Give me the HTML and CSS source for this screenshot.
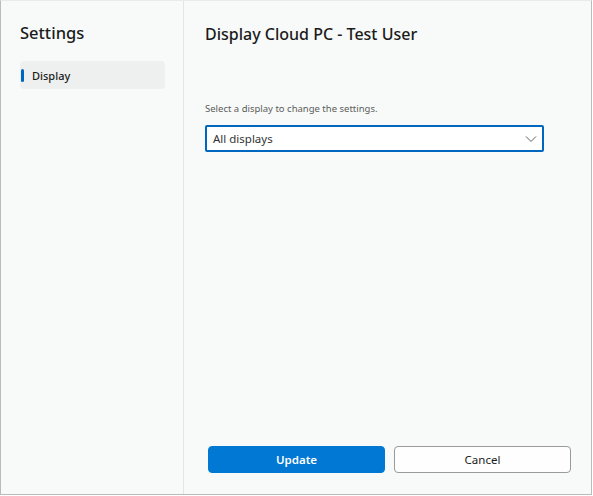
FILE: index.html
```html
<!DOCTYPE html>
<html>
<head>
<meta charset="utf-8">
<link rel="stylesheet" href="styles.css">
</head>
<body>
<div class="window">
  <aside class="sidebar">
    <h1 class="side-title">Settings</h1>
    <div class="nav-item active"><span class="bar"></span><span>Display</span></div>
  </aside>
  <main class="main">
    <h2 class="title">Display Cloud PC - Test User</h2>
    <div class="field">
      <label class="label">Select a display to change the settings.</label>
      <div class="select">
        <span>All displays</span>
        <svg class="chev" width="12" height="8" viewBox="0 0 12 8"><path d="M1 1.5 L6 6.5 L11 1.5" fill="none" stroke="#5f5f5f" stroke-width="1"/></svg>
      </div>
    </div>
    <div class="actions">
      <button class="btn primary">Update</button>
      <button class="btn secondary">Cancel</button>
    </div>
  </main>
</div>
</body>
</html>
```
FILE: styles.css
```css
html, body {
  margin: 0;
  padding: 0;
  background: #ffffff;
}
body {
  font-family: "Noto Sans", "Open Sans", sans-serif;
  color: #1b1b1b;
}
.window {
  width: 590px;
  height: 493px;
  border: 1px solid #b9bcbb;
  border-top-color: #e8ebea;
  display: flex;
  background: #f7faf8;
}
.sidebar {
  width: 183px;
  flex: none;
  border-right: 1px solid #e3e6e4;
  padding: 20px 18px 0 19px;
  box-sizing: border-box;
}
.side-title {
  margin: 0;
  font-size: 16.5px;
  font-weight: 500;
  line-height: 24px;
}
.nav-item {
  margin-top: 16px;
  height: 28px;
  width: 145px;
  background: #edf0ee;
  border-radius: 4px;
  display: flex;
  align-items: center;
  font-size: 11px;
  font-weight: 500;
  gap: 8px;
}
.bar {
  width: 3px;
  height: 13px;
  background: #0067c0;
  border-radius: 2px;
  margin-left: 1px;
}
.main {
  flex: 1;
  display: flex;
  flex-direction: column;
  padding: 20px 20px 20px 21px;
}
.title {
  margin: 0;
  font-size: 16px;
  font-weight: 500;
  line-height: 26px;
}
.field {
  margin-top: 55px;
  display: flex;
  flex-direction: column;
}
.label {
  font-size: 9.5px;
  color: #5c5c5c;
  line-height: 14px;
  margin-bottom: 9px;
}
.select {
  width: 339px;
  height: 27px;
  box-sizing: border-box;
  border: 2px solid #0067c0;
  border-radius: 2px;
  background: #fff;
  display: flex;
  align-items: center;
  justify-content: space-between;
  padding: 0 5px 0 6px;
  font-size: 11.5px;
  color: #333;
}
.actions {
  margin-top: auto;
  display: flex;
  gap: 9px;
  padding-left: 3px;
  margin-bottom: 1px;
}
.btn {
  width: 177px;
  height: 27px;
  border-radius: 4px;
  font-family: inherit;
  font-size: 11.5px;
  cursor: pointer;
}
.primary {
  background: #0078d4;
  color: #fff;
  border: 1px solid #0078d4;
  font-weight: 600;
}
.secondary {
  background: #fdfefd;
  color: #1b1b1b;
  border: 1px solid #9a9a9a;
}
```
